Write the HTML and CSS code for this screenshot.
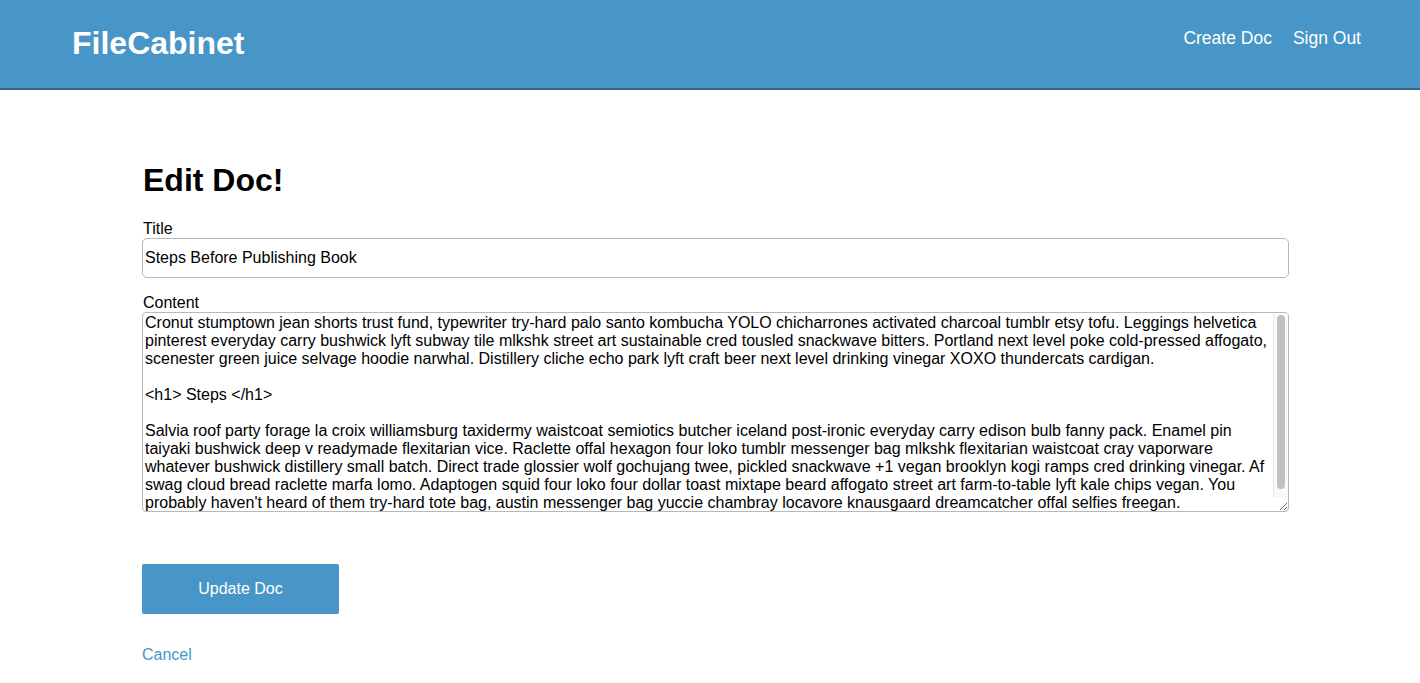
FILE: index.html
```html
<!DOCTYPE html>
<html>
<head>
<meta charset="utf-8">
<title>FileCabinet</title>
<link rel="stylesheet" href="styles.css">
</head>
<body>
<header class="topbar">
  <a class="brand" href="#">FileCabinet</a>
  <nav class="nav">
    <a href="#">Create Doc</a>
    <a href="#">Sign Out</a>
  </nav>
</header>
<main class="page">
  <h1 class="heading">Edit Doc!</h1>
  <form class="form">
    <label class="label" for="title">Title</label>
    <input class="input" id="title" type="text" value="Steps Before Publishing Book">
    <label class="label label-content" for="content">Content</label>
    <div class="textarea-wrap">
      <textarea class="textarea" id="content">Cronut stumptown jean shorts trust fund, typewriter try-hard palo santo kombucha YOLO chicharrones activated charcoal tumblr etsy tofu. Leggings helvetica pinterest everyday carry bushwick lyft subway tile mlkshk street art sustainable cred tousled snackwave bitters. Portland next level poke cold-pressed affogato, scenester green juice selvage hoodie narwhal. Distillery cliche echo park lyft craft beer next level drinking vinegar XOXO thundercats cardigan.

&lt;h1&gt; Steps &lt;/h1&gt;

Salvia roof party forage la croix williamsburg taxidermy waistcoat semiotics butcher iceland post-ironic everyday carry edison bulb fanny pack. Enamel pin taiyaki bushwick deep v readymade flexitarian vice. Raclette offal hexagon four loko tumblr messenger bag mlkshk flexitarian waistcoat cray vaporware whatever bushwick distillery small batch. Direct trade glossier wolf gochujang twee, pickled snackwave +1 vegan brooklyn kogi ramps cred drinking vinegar. Af swag cloud bread raclette marfa lomo. Adaptogen squid four loko four dollar toast mixtape beard affogato street art farm-to-table lyft kale chips vegan. You probably haven't heard of them try-hard tote bag, austin messenger bag yuccie chambray locavore knausgaard dreamcatcher offal selfies freegan.


</textarea>
      <div class="scrollbar" aria-hidden="true"><div class="scrollbar-thumb"></div></div>
    </div>
    <button class="button" type="button">Update Doc</button>
  </form>
  <a class="cancel" href="#">Cancel</a>
</main>
</body>
</html>
```
FILE: styles.css
```css
html, body {
  margin: 0;
  padding: 0;
  background: #ffffff;
  font-family: "Liberation Sans", Arial, Helvetica, sans-serif;
  color: #000000;
}

.topbar {
  height: 88px;
  background: #4895c7;
  border-bottom: 2px solid #336494;
  display: flex;
  justify-content: space-between;
  align-items: flex-start;
  padding: 0 59px 0 72px;
}

.brand {
  color: #ffffff;
  text-decoration: none;
  font-weight: bold;
  font-size: 32px;
  line-height: 37px;
  margin-top: 25px;
}

.nav {
  display: flex;
  gap: 21px;
  margin-top: 28px;
}

.nav a {
  color: #ffffff;
  text-decoration: none;
  font-size: 17.5px;
  line-height: 21px;
}

.page {
  width: 1147px;
  margin-left: 142px;
  padding-top: 72px;
}

.heading {
  margin: 0 0 0 1px;
  font-size: 32px;
  line-height: 37px;
  font-weight: bold;
}

.form {
  display: flex;
  flex-direction: column;
  align-items: flex-start;
  margin-top: 20px;
}

.label {
  font-size: 16px;
  line-height: 19px;
  margin-left: 1px;
}

.label-content {
  margin-top: 15px;
}

.input {
  box-sizing: border-box;
  width: 1147px;
  height: 40px;
  border: 1px solid #b8b8b8;
  border-radius: 5px;
  padding: 0 2px;
  margin: 0;
  font-family: "Liberation Sans", Arial, Helvetica, sans-serif;
  font-size: 16px;
  color: #000000;
  background: #ffffff;
  outline: none;
}

.textarea-wrap {
  position: relative;
  width: 1147px;
  height: 200px;
}

.textarea {
  display: block;
  box-sizing: border-box;
  width: 1147px;
  height: 200px;
  border: 1px solid #b8b8b8;
  border-radius: 4px;
  padding: 1px 17px 1px 2px;
  margin: 0;
  font-family: "Liberation Sans", Arial, Helvetica, sans-serif;
  font-size: 16px;
  line-height: 18px;
  color: #000000;
  background: #ffffff;
  resize: both;
  outline: none;
  overflow: hidden;
  scrollbar-width: none;
}

.scrollbar {
  position: absolute;
  top: 1px;
  right: 1px;
  width: 14px;
  height: 184px;
  background: #fafafa;
  border-left: 1px solid #e6e6e6;
  border-top-right-radius: 3px;
}

.scrollbar-thumb {
  margin: 2px 0 0 3px;
  width: 8px;
  height: 174px;
  border-radius: 4px;
  background: #c1c1c1;
}

.button {
  margin-top: 52px;
  width: 197px;
  height: 50px;
  background: #4895c7;
  color: #ffffff;
  border: none;
  border-radius: 2px;
  font-family: "Liberation Sans", Arial, Helvetica, sans-serif;
  font-size: 16px;
  cursor: pointer;
}

.cancel {
  display: inline-block;
  margin-top: 32px;
  color: #4895c7;
  text-decoration: none;
  font-size: 16px;
  line-height: 18px;
}
```
